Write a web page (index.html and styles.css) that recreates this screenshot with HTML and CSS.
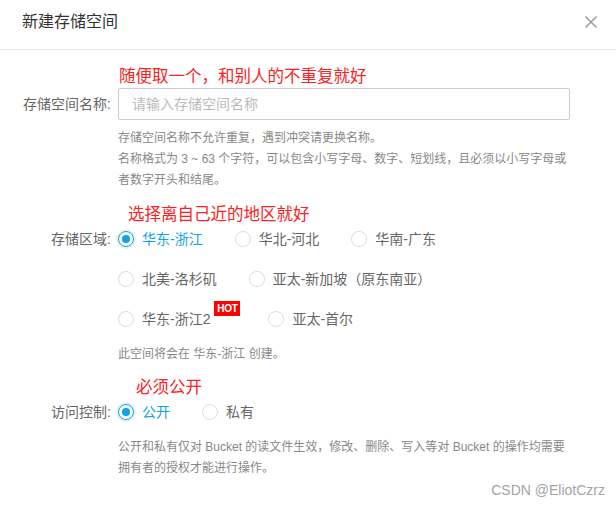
FILE: index.html
```html
<!DOCTYPE html>
<html>
<head>
  <meta charset="UTF-8">
  <meta name="viewport" content="width=device-width, initial-scale=1.0">
  <title>新建存储空间</title>
  <link rel="stylesheet" href="styles.css">
</head>
<body>
  <div class="dialog">
    <div class="dialog-header">
      <h2 class="dialog-title">新建存储空间</h2>
      <button class="close-btn" aria-label="关闭">
        <svg xmlns="http://www.w3.org/2000/svg" width="12" height="12" viewBox="0 0 12 12" fill="none" stroke="#999" stroke-width="1.5">
          <path d="M0.5 0.5L11.5 11.5"></path>
          <path d="M11.5 0.5L0.5 11.5"></path>
        </svg>
      </button>
    </div>

    <div class="dialog-body">
      <div class="note note-name">随便取一个，和别人的不重复就好</div>
      <div class="form-row form-row-center">
        <label class="form-label">存储空间名称:</label>
        <div class="form-control">
          <input class="text-input" type="text" placeholder="请输入存储空间名称">
        </div>
      </div>
      <div class="form-help">
        存储空间名称不允许重复，遇到冲突请更换名称。<br>
        名称格式为 3 ~ 63 个字符，可以包含小写字母、数字、短划线，且必须以小写字母或<br>
        者数字开头和结尾。
      </div>

      <div class="note note-region">选择离自己近的地区就好</div>
      <div class="form-row">
        <label class="form-label">存储区域:</label>
        <div class="form-control radio-rows">
          <div class="radio-row">
            <label class="radio is-checked"><span class="radio-dot"></span><span class="radio-text">华东-浙江</span></label>
            <label class="radio"><span class="radio-dot"></span><span class="radio-text">华北-河北</span></label>
            <label class="radio"><span class="radio-dot"></span><span class="radio-text">华南-广东</span></label>
          </div>
          <div class="radio-row">
            <label class="radio"><span class="radio-dot"></span><span class="radio-text">北美-洛杉矶</span></label>
            <label class="radio"><span class="radio-dot"></span><span class="radio-text">亚太-新加坡（原东南亚）</span></label>
          </div>
          <div class="radio-row">
            <label class="radio radio-hot"><span class="radio-dot"></span><span class="radio-text">华东-浙江2</span><span class="hot-badge">HOT</span></label>
            <label class="radio"><span class="radio-dot"></span><span class="radio-text">亚太-首尔</span></label>
          </div>
        </div>
      </div>
      <div class="form-hint">此空间将会在 华东-浙江 创建。</div>

      <div class="note note-access">必须公开</div>
      <div class="form-row">
        <label class="form-label">访问控制:</label>
        <div class="form-control">
          <div class="radio-row">
            <label class="radio is-checked"><span class="radio-dot"></span><span class="radio-text">公开</span></label>
            <label class="radio"><span class="radio-dot"></span><span class="radio-text">私有</span></label>
          </div>
        </div>
      </div>
      <div class="form-help form-help-access">
        公开和私有仅对 Bucket 的读文件生效，修改、删除、写入等对 Bucket 的操作均需要<br>
        拥有者的授权才能进行操作。
      </div>
    </div>

    <div class="watermark">CSDN @EliotCzrz</div>
  </div>
</body>
</html>
```

FILE: styles.css
```css
body {
  margin: 0;
  font-family: "Liberation Sans", "Noto Sans CJK SC", sans-serif;
  background: #fff;
  color: #666;
}
.dialog {
  position: relative;
  width: 616px;
  height: 505px;
  background: #fff;
  overflow: hidden;
}
.dialog-header {
  display: flex;
  justify-content: space-between;
  align-items: center;
  height: 50px;
  box-sizing: border-box;
  padding: 12px 19px 18px 22px;
  border-bottom: 1px solid #e8e8e8;
}
.dialog-title {
  margin: 0;
  font-size: 16px;
  line-height: 20px;
  font-weight: normal;
  color: #333;
}
.close-btn {
  display: flex;
  background: none;
  border: none;
  padding: 0;
  cursor: pointer;
}
.dialog-body {
  padding: 16px 46px 0 22px;
}
.note {
  font-size: 16.5px;
  line-height: 20px;
  color: #fa2222;
}
.note-name {
  padding-left: 97px;
}
.note-region {
  margin-top: 13px;
  padding-left: 106px;
}
.note-access {
  margin-top: 13px;
  padding-left: 114px;
}
.form-row {
  display: flex;
  align-items: flex-start;
}
.form-row-center {
  align-items: center;
  margin-top: 2px;
}
.form-label {
  width: 96px;
  flex-shrink: 0;
  box-sizing: border-box;
  padding-right: 7px;
  text-align: right;
  font-size: 14px;
  line-height: 20px;
  color: #666;
}
.form-control {
  flex: 1;
}
.text-input {
  display: block;
  width: 100%;
  height: 32px;
  box-sizing: border-box;
  padding: 0 13px;
  border: 1px solid #ccc;
  border-radius: 2px;
  font-family: inherit;
  font-size: 14px;
  color: #333;
  outline: none;
}
.text-input::placeholder {
  color: #bbb;
}
.form-help {
  margin-top: 8px;
  padding-left: 96px;
  font-size: 12px;
  line-height: 21px;
  color: #888;
}
.form-help-access {
  margin-top: 15px;
}
.form-hint {
  margin-top: 15px;
  padding-left: 96px;
  font-size: 12px;
  line-height: 20px;
  color: #888;
}
.radio-rows {
  display: flex;
  flex-direction: column;
  gap: 20px;
}
.form-row:has(.radio-rows) {
  margin-top: 5px;
}
.note-access + .form-row {
  margin-top: 5px;
}
.radio-row {
  display: flex;
  align-items: center;
}
.radio {
  display: flex;
  align-items: center;
  margin-right: 32px;
  height: 20px;
  cursor: pointer;
}
.radio-dot {
  position: relative;
  width: 16px;
  height: 16px;
  box-sizing: border-box;
  border: 1px solid #ddd;
  border-radius: 50%;
  background: #fff;
  margin-right: 8px;
}
.radio.is-checked .radio-dot {
  border-color: #10a2e6;
  box-shadow: 0 0 0 2px #e2f3fb;
}
.radio.is-checked .radio-dot::after {
  content: "";
  position: absolute;
  top: 3px;
  left: 3px;
  width: 8px;
  height: 8px;
  border-radius: 50%;
  background: #10a2e6;
}
.radio-text {
  font-size: 14px;
  line-height: 20px;
  color: #666;
  white-space: nowrap;
}
.radio.is-checked .radio-text {
  color: #10a2e6;
}
.radio-hot {
  margin-right: 28px;
}
.hot-badge {
  align-self: flex-start;
  margin-top: -8px;
  margin-left: 4px;
  width: 26px;
  height: 15px;
  line-height: 15px;
  text-align: center;
  background: #f00;
  color: #fff;
  font-size: 10px;
  font-weight: bold;
  letter-spacing: -0.3px;
}
.watermark {
  position: absolute;
  right: 11px;
  bottom: 7px;
  font-family: "Liberation Sans", sans-serif;
  font-size: 14px;
  line-height: 16px;
  color: #a3a3a3;
}
```
